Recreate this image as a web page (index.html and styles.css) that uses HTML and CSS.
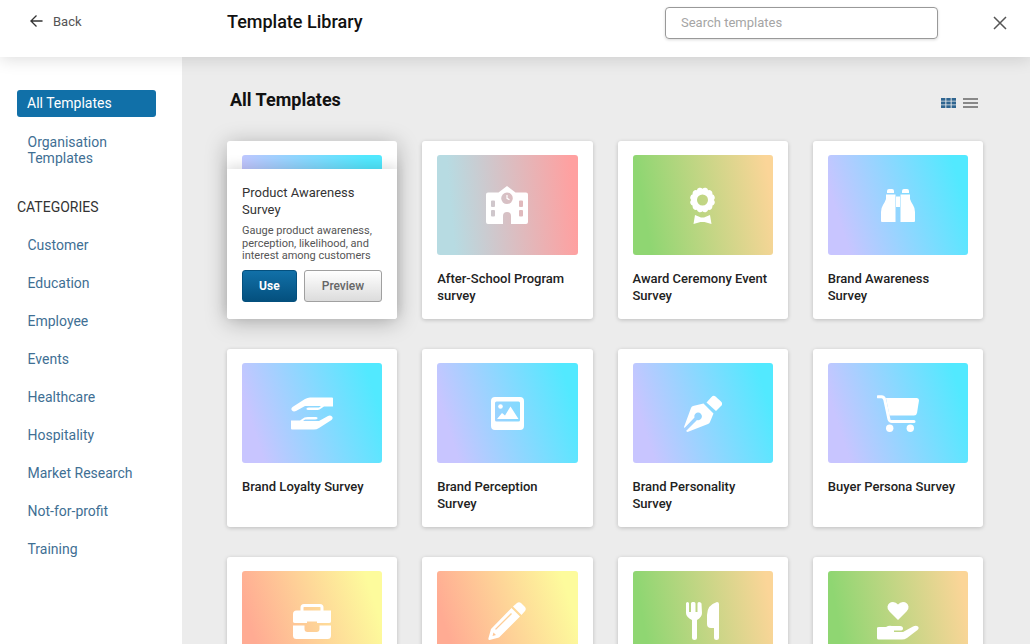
FILE: index.html
```html
<!DOCTYPE html>
<html lang="en">
<head>
<meta charset="utf-8">
<title>Template Library</title>
<link rel="stylesheet" href="styles.css">
</head>
<body>
<header class="topbar">
  <a class="back">
    <svg class="back-icon" viewBox="0 0 14 14"><path d="M13.5 7H1M7 1 1 7l6 6"/></svg>
    <span>Back</span>
  </a>
  <h1 class="page-title">Template Library</h1>
  <div class="search">Search templates</div>
  <svg class="close" viewBox="0 0 14 14"><path d="M1 1l12 12M13 1 1 13"/></svg>
</header>
<div class="body-row">
  <aside class="sidebar">
    <a class="nav-active">All Templates</a>
    <a class="nav-link nav-org">Organisation Templates</a>
    <h2 class="cat-title">CATEGORIES</h2>
    <nav class="cats">
      <a class="nav-link">Customer</a>
      <a class="nav-link">Education</a>
      <a class="nav-link">Employee</a>
      <a class="nav-link">Events</a>
      <a class="nav-link">Healthcare</a>
      <a class="nav-link">Hospitality</a>
      <a class="nav-link">Market Research</a>
      <a class="nav-link">Not-for-profit</a>
      <a class="nav-link">Training</a>
    </nav>
  </aside>
  <main class="content">
    <div class="content-head">
      <h2 class="content-title">All Templates</h2>
      <div class="views">
        <svg class="view" viewBox="0 0 15 10"><path class="v-on" d="M0 0h4.4v2.8H0zM5.3 0h4.4v2.8H5.3zM10.6 0H15v2.8h-4.4zM0 3.6h4.4v2.8H0zM5.3 3.6h4.4v2.8H5.3zM10.6 3.6H15v2.8h-4.4zM0 7.2h4.4V10H0zM5.3 7.2h4.4V10H5.3zM10.6 7.2H15V10h-4.4z"/></svg>
        <svg class="view" viewBox="0 0 15 10"><path class="v-off" d="M0 0h15v2H0zM0 4h15v2H0zM0 8h15v2H0z"/></svg>
      </div>
    </div>
    <div class="grid">
      <article class="card card-hover">
        <div class="thumb g-blue"></div>
        <div class="hover-panel">
          <h3 class="hover-title">Product Awareness Survey</h3>
          <p class="hover-desc">Gauge product awareness, perception, likelihood, and interest among customers</p>
          <div class="hover-actions">
            <button class="btn-use">Use</button>
            <button class="btn-preview">Preview</button>
          </div>
        </div>
      </article>

      <article class="card">
        <div class="thumb g-rose">
          <svg class="ico" width="42" height="38" viewBox="0 0 42 38"><path fill-rule="evenodd" d="M21 0l8.5 6.500H40q2 0 2 2V36q0 2-2 2H2q-2 0-2-2V8.500q0-2 2-2h10.500zM21 6.500a5.800 5.800 0 1 0 0 11.600 5.800 5.800 0 0 0 0-11.600zM6 14.500q-1 0-1 1V20q0 1 1 1h2q1 0 1-1v-4.500q0-1-1-1zM34 14.500q-1 0-1 1V20q0 1 1 1h2q1 0 1-1v-4.500q0-1-1-1zM6 24q-1 0-1 1v4.500q0 1 1 1h2q1 0 1-1V25q0-1-1-1zM34 24q-1 0-1 1v4.500q0 1 1 1h2q1 0 1-1V25q0-1-1-1zM21 26q-4 0-4 4v8h8v-8q0-4-4-4z"/><path class="hand" d="M21 9v3.300l2.500 1.500"/></svg>
        </div>
        <h3 class="card-title">After-School Program survey</h3>
      </article>

      <article class="card">
        <div class="thumb g-green">
          <svg class="ico" width="25" height="38" viewBox="0 0 25 38"><path fill-rule="evenodd" d="M23.800 14A3.400 3.400 0 0 1 22.300 19.650 3.400 3.400 0 0 1 18.150 23.800 3.400 3.400 0 0 1 12.500 25.300 3.400 3.400 0 0 1 6.850 23.800 3.400 3.400 0 0 1 2.700 19.650 3.400 3.400 0 0 1 1.200 14 3.400 3.400 0 0 1 2.700 8.350 3.400 3.400 0 0 1 6.850 4.200 3.400 3.400 0 0 1 12.500 2.700 3.400 3.400 0 0 1 18.150 4.200 3.400 3.400 0 0 1 22.300 8.350 3.400 3.400 0 0 1 23.800 14zM12.500 8.500a5.500 5.500 0 1 0 0 11 5.500 5.500 0 0 0 0-11z"/><path d="M5 29l6 2.500h3l6-2.500 1.500 9-7-2h-4l-7 2z"/></svg>
        </div>
        <h3 class="card-title">Award Ceremony Event Survey</h3>
      </article>

      <article class="card">
        <div class="thumb g-blue">
          <svg class="ico" width="34" height="33" viewBox="0 0 34 33"><path d="M6 2q0-2 2-2h3q2 0 2 2v2H6zM21 2q0-2 2-2h3q2 0 2 2v2h-7zM5 5.500h9.500V33H1q-1 0-1-1V23q0-4 2-7 2-3 3-6zM29 5.500h-9.500V33H33q1 0 1-1V23q0-4-2-7-2-3-3-6zM15 7.500h4V18h-4z"/></svg>
        </div>
        <h3 class="card-title">Brand Awareness Survey</h3>
      </article>

      <article class="card">
        <div class="thumb g-blue">
          <svg class="ico" width="42" height="33" viewBox="0 0 42 33"><path d="M42 1.500V9.500H33L28.500 12.500Q27 13 25 13H17.500Q15 13 15.500 11.500 16 10.500 18 10.500H28L30 9H14L5 14Q2.500 15 1 13.500 -.5 11.500 1.500 10L14 2Q16.500 .500 19 .500H41Q42 .500 42 1.500zM0 31.500V23.500H9L13.500 20.500Q15 20 17 20H24.500Q27 20 26.500 21.500 26 22.500 24 22.500H14L12 24H28L37 19Q39.500 18 41 19.500 42.500 21.500 40.500 23L28 31Q25.500 32.500 23 32.500H1Q0 32.500 0 31.500z"/></svg>
        </div>
        <h3 class="card-title">Brand Loyalty Survey</h3>
      </article>

      <article class="card">
        <div class="thumb g-blue">
          <svg class="ico" width="33" height="33" viewBox="0 0 33 33"><path fill-rule="evenodd" d="M4 0h25q4 0 4 4v25q0 4-4 4H4q-4 0-4-4V4q0-4 4-4zM5.500 4.500q-1.500 0-1.500 1.500v17q0 1.500 1.500 1.500h22q1.500 0 1.500-1.500V6q0-1.500-1.500-1.500z"/><circle cx="9.500" cy="9.500" r="2.300"/><path d="M6 22l5-6 3 2.500 5.500-9 8 12.500z"/></svg>
        </div>
        <h3 class="card-title">Brand Perception Survey</h3>
      </article>

      <article class="card">
        <div class="thumb g-blue">
          <svg class="ico" width="38" height="37" viewBox="0 0 38 37"><path d="M22.500 7.500l5-5.500q2-2 4-.500l5.500 5q2 2 .500 4l-5.500 5.500z"/><path fill-rule="evenodd" d="M19.500 8.500l10 10L26 27q-.500 1.500-2 2L3.500 37l-1.500-1 11-11a3.800 3.800 0 1 0-2.500-2.500L.500 33 0 32 7 13q.500-1.500 2-2z"/></svg>
        </div>
        <h3 class="card-title">Brand Personality Survey</h3>
      </article>

      <article class="card">
        <div class="thumb g-blue">
          <svg class="ico" width="42" height="37" viewBox="0 0 42 37"><path d="M9 3h31q2 0 2 2.500L40 18q-.500 2.500-3 2.500H12.500z"/><path class="cart-line" d="M1 1.800h3.500q2.500 0 3.200 2.700l4.300 20q.500 2 3 2h22"/><circle cx="12.700" cy="33.300" r="3.700"/><circle cx="33.300" cy="33.300" r="3.700"/></svg>
        </div>
        <h3 class="card-title">Buyer Persona Survey</h3>
      </article>

      <article class="card">
        <div class="thumb g-orange">
          <svg class="ico" width="38" height="35" viewBox="0 0 38 35"><path fill-rule="evenodd" d="M11 0h16q3.500 0 3.500 3.500V6.500H38V6.500 17.500Q38 19 36 19H24V17.500H14V19H2Q0 19 0 17.500V10Q0 6.500 3.500 6.500H7.500V3.500Q7.500 0 11 0zM11 3q-.500 0-.500.500V6.500h17V3.500q0-.500-.500-.500z"/><path d="M0 21.500H11.500V25q0 3 3 3h9q3 0 3-3V21.500H38V31.500Q38 35 34.500 35H3.500Q0 35 0 31.500z"/></svg>
        </div>
        <h3 class="card-title">Business Survey</h3>
      </article>

      <article class="card">
        <div class="thumb g-orange">
          <svg class="ico" width="38" height="38" viewBox="0 0 38 38"><path d="M25 4.500l4-3.500q2-1.500 4 0l4 4q1.500 2 0 4l-3.500 4z"/><path fill-rule="evenodd" d="M23.500 6l8.500 8.500L11 35.500 1.500 38Q0 38 .500 36L3 27zM23 11 7 27l1 .800L24 12zM5.500 30.500l-1 3.500 3.500-1z"/></svg>
        </div>
        <h3 class="card-title">Writing Survey</h3>
      </article>

      <article class="card">
        <div class="thumb g-green">
          <svg class="ico" width="33" height="38" viewBox="0 0 33 38"><path d="M1.500 0Q3 0 3 1.500V10H5V1.500Q5 0 6.500 0H8Q9.500 0 9.500 1.500V10H11.500V1.500Q11.500 0 13 0 15 0 15.500 1.500L16 11Q16 15 11 18V36Q11 38 8.500 38 6 38 6 36V18Q0 15 0 11V1.500Q0 0 1.500 0zM31 0Q33 0 33 2V36Q33 38 30.500 38 28 38 28 36V26H25Q21 26 21 22V13Q21 3 31 0z"/></svg>
        </div>
        <h3 class="card-title">Catering Survey</h3>
      </article>

      <article class="card">
        <div class="thumb g-green">
          <svg class="ico" width="42" height="38" viewBox="0 0 42 38"><path d="M21 18L12.500 9.500Q10 7 10.500 4.500 11.500 0 16 0 19 0 21 2.500 23 0 26 0 30.500 0 31.500 4.500 32 7 29.500 9.500z"/><path d="M0 26Q0 25 2 25H9Q12 23 15 24H23Q26 24 26 26.500 26 28.500 23 28.500H17V30H26L36 24.500Q39 23 41 24.500 42.500 26.500 40.500 28L30 36Q27.500 37.500 25 37.500H1.500Q0 37.500 0 36z"/></svg>
        </div>
        <h3 class="card-title">Charity Survey</h3>
      </article>
    </div>
  </main>
</div>
</body>
</html>
```

FILE: styles.css
```css
* { box-sizing: border-box; }
html, body { margin: 0; height: 100%; overflow: hidden; }
body {
  font-family: Roboto, "Liberation Sans", sans-serif;
  background: #fff;
  display: flex;
  flex-direction: column;
  color: #222;
}
h1, h2, h3, p { margin: 0; }

.topbar {
  flex: none;
  height: 57px;
  display: flex;
  align-items: flex-start;
  background: #fff;
  position: relative;
  z-index: 2;
  box-shadow: 0 2px 16px rgba(0, 0, 0, .14);
  padding-left: 30px;
}
.back {
  width: 197px;
  display: flex;
  align-items: center;
  gap: 10px;
  height: 42px;
  font-size: 13px;
  color: #555;
}
.back-icon { width: 13px; height: 14px; fill: none; stroke: #333; stroke-width: 1.4; }
.page-title {
  font-size: 18px;
  font-weight: 500;
  line-height: 21px;
  margin-top: 11px;
  color: #111;
  width: 438px;
}
.search {
  margin-top: 7px;
  width: 273px;
  height: 32px;
  border: 1px solid #999;
  border-radius: 4px;
  box-shadow: 0 1px 3px rgba(0, 0, 0, .15);
  padding-left: 15px;
  font-size: 13px;
  line-height: 30px;
  color: #a5a5a5;
}
.close {
  margin: 16px 0 0 55px;
  width: 14px;
  height: 14px;
  fill: none;
  stroke: #555;
  stroke-width: 1.5;
}

.body-row { flex: 1; display: flex; min-height: 0; }
.sidebar {
  flex: none;
  width: 182px;
  background: #fff;
  padding: 33px 26px 0 17px;
  font-size: 14px;
}
.nav-active {
  display: block;
  height: 27px;
  line-height: 27px;
  background: #1170a8;
  color: #fff;
  border-radius: 3px;
  padding-left: 10px;
}
.nav-link {
  display: block;
  color: #3f6f94;
  padding-left: 10.5px;
  line-height: 16px;
}
.nav-org { margin-top: 17px; }
.cat-title {
  font-size: 14px;
  font-weight: 400;
  color: #333;
  line-height: 16px;
  margin-top: 33px;
}
.cats { display: flex; flex-direction: column; gap: 22px; margin-top: 22px; }

.content {
  flex: 1;
  background: #ececec;
  padding: 32px 47px 0 45px;
  min-width: 0;
}
.content-head {
  display: flex;
  justify-content: space-between;
  align-items: center;
  height: 22px;
  padding-left: 3px;
  margin-bottom: 30px;
}
.content-title { font-size: 18px; font-weight: 700; line-height: 22px; color: #111; }
.views { display: flex; gap: 7px; margin: 6px 5px 0 0; }
.view { width: 15px; height: 10px; display: block; }
.v-on { fill: #2f6590; }
.v-off { fill: #888; }

.grid {
  display: grid;
  grid-template-columns: repeat(4, 1fr);
  gap: 30px 25px;
  width: 756px;
}
.card {
  position: relative;
  height: 178px;
  background: #fff;
  border-radius: 3px;
  padding: 14px 15px 0;
  box-shadow: 0 1px 4px rgba(0, 0, 0, .2);
}
.card-hover { box-shadow: 0 3px 22px rgba(0, 0, 0, .28); }
.thumb {
  height: 100px;
  border-radius: 3px;
  display: flex;
  align-items: center;
  justify-content: center;
}
.g-blue { background: linear-gradient(72deg, #c8c5ff 13%, #52e9ff 90%); }
.g-rose { background: linear-gradient(85deg, #b7dbe2 12%, #ffa0a0 95%); }
.g-green { background: linear-gradient(80deg, #8fd672 12%, #fbd598 95%); }
.g-orange { background: linear-gradient(72deg, #ffab93 13%, #fdfb9c 90%); }
.ico { fill: #fff; display: block; }
.hand { fill: none; stroke: #fff; stroke-width: 1.2; }
.cart-line { fill: none; stroke: #fff; stroke-width: 3; stroke-linecap: round; }
.card-title {
  font-size: 13px;
  font-weight: 500;
  line-height: 17px;
  color: #222;
  margin-top: 15px;
}
.hover-panel {
  position: absolute;
  left: 0;
  right: 0;
  top: 28px;
  bottom: 0;
  background: #fff;
  border-radius: 0 0 3px 3px;
  padding: 15px 15px 0;
  box-shadow: 0 -4px 12px rgba(0, 0, 0, .12);
}
.hover-title { font-size: 13px; font-weight: 400; line-height: 17px; color: #333; }
.hover-desc { font-size: 11px; line-height: 12.500px; color: #555; margin-top: 7px; }
.hover-actions { display: flex; gap: 7px; margin-top: 7px; }
.btn-use, .btn-preview {
  font-family: inherit;
  font-size: 12px;
  height: 32px;
  border-radius: 3px;
  padding: 0;
  cursor: pointer;
}
.btn-use {
  width: 55px;
  font-weight: 700;
  color: #fff;
  border: 1px solid #04507e;
  background: linear-gradient(#1170a8, #04507e);
}
.btn-preview {
  width: 79px;
  font-weight: 500;
  color: #666;
  border: 1px solid #a0a0a0;
  background: linear-gradient(#fff, #dcdcdc);
}
```
